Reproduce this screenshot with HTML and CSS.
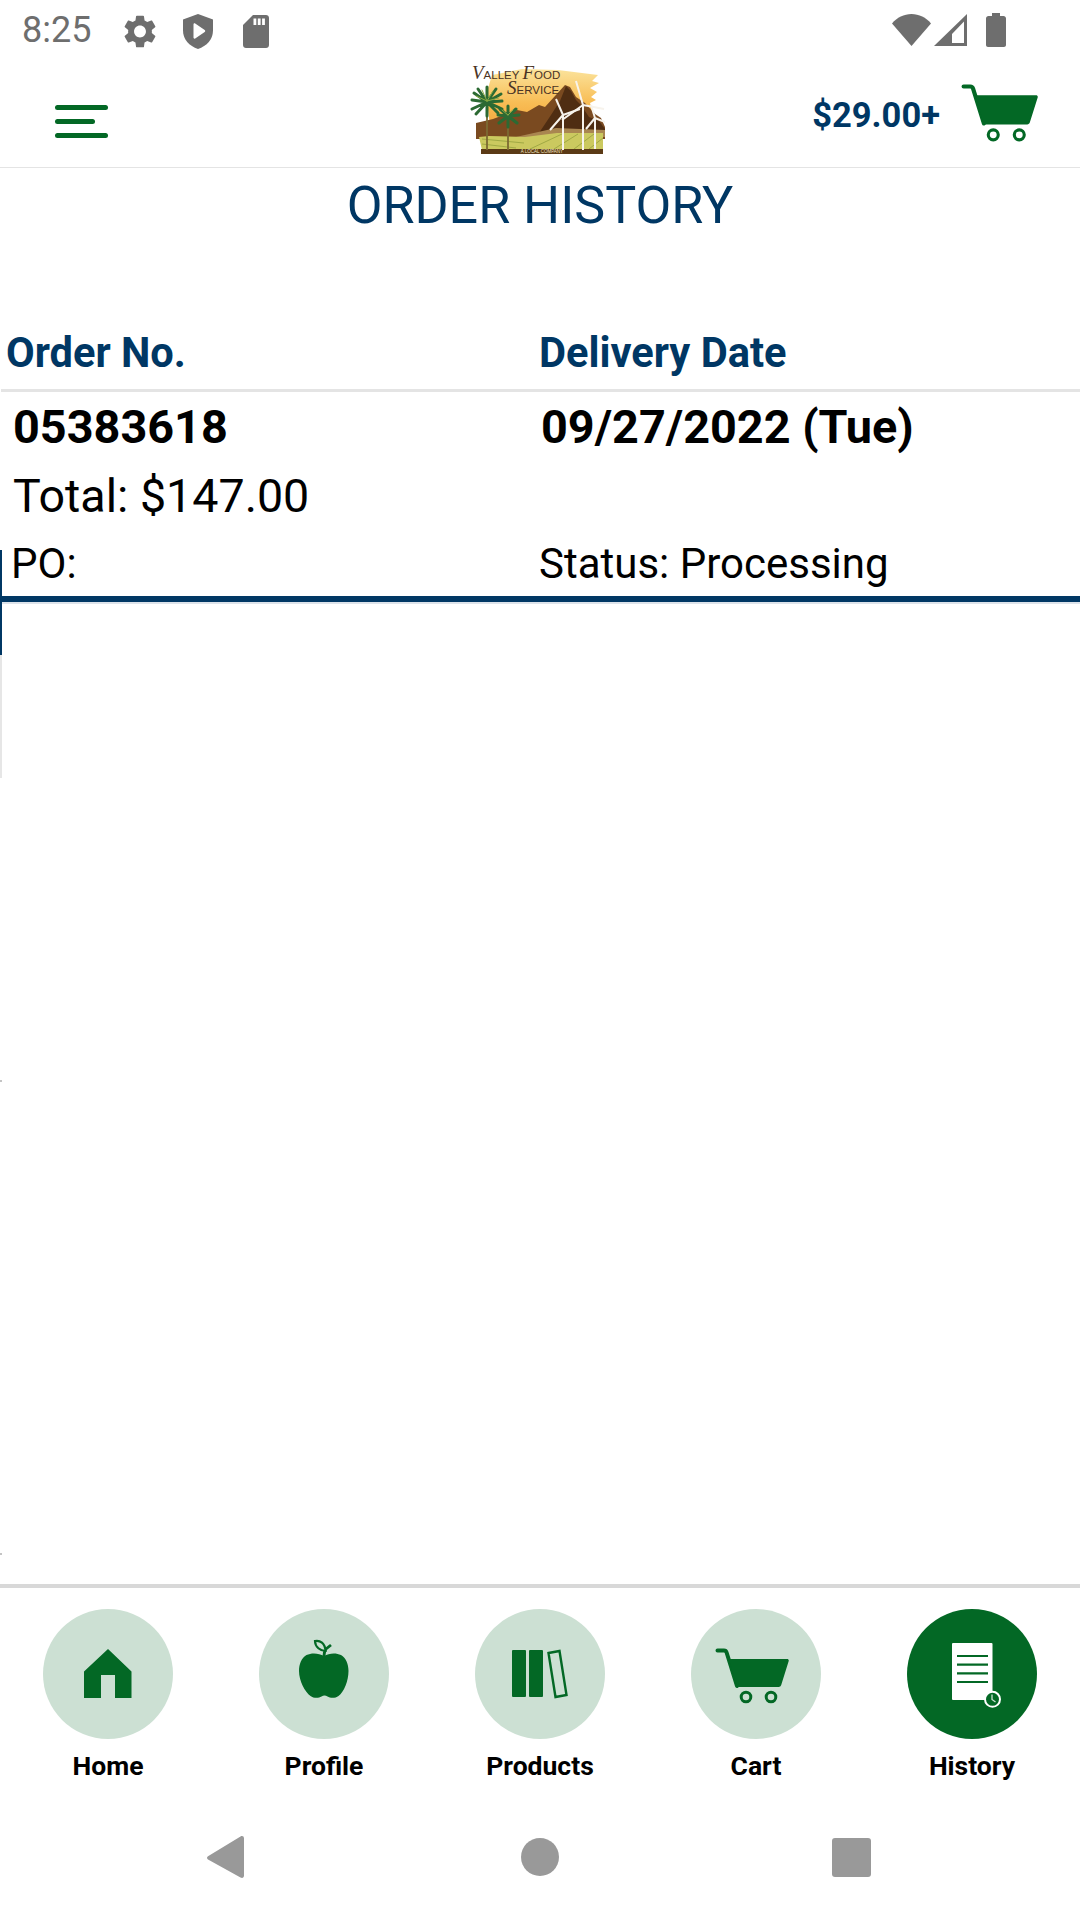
FILE: index.html
```html
<!DOCTYPE html>
<html lang="en">
<head>
    <meta charset="UTF-8">
    <meta name="viewport" content="width=device-width, initial-scale=1.0">
    <title>Order History</title>
    <link rel="stylesheet" href="styles.css">
</head>
<body>
    <svg class="defs" width="0" height="0">
        <symbol id="cart" viewBox="24 39 74 56">
            <path d="M26.500 41.500H33c1.300 0 2.200.7 2.600 2L46 77" fill="none" stroke="currentColor" stroke-width="4" stroke-linecap="round"/>
            <path d="M39 50h57c1.400 0 2 .9 1.700 2l-7.500 24c-.4 1.300-1.300 2-2.600 2H48c-1.300 0-2.200-.7-2.600-2L38 51z" fill="currentColor"/>
            <circle cx="55" cy="88" r="4.800" fill="none" stroke="currentColor" stroke-width="3"/>
            <circle cx="80" cy="88" r="4.800" fill="none" stroke="currentColor" stroke-width="3"/>
        </symbol>
    </svg>

    <div class="status-bar">
        <span class="time">8:25</span>
        <svg class="st-gear" viewBox="2.500 2 19 20"><path fill="#6e6e6e" d="M19.140 12.940c.04-.3.06-.61.06-.94 0-.32-.02-.64-.07-.94l2.030-1.580c.18-.14.23-.41.12-.61l-1.920-3.320c-.12-.22-.37-.29-.59-.22l-2.390.96c-.5-.38-1.030-.7-1.620-.94l-.36-2.540c-.04-.24-.24-.41-.48-.41h-3.840c-.24 0-.43.17-.47.41l-.36 2.540c-.59.24-1.130.57-1.620.94l-2.390-.96c-.22-.08-.47 0-.59.22L2.740 8.870c-.12.21-.08.47.12.61l2.030 1.580c-.05.3-.09.63-.09.94s.02.64.07.94l-2.030 1.580c-.18.14-.23.41-.12.61l1.920 3.320c.12.22.37.29.59.22l2.390-.96c.5.38 1.030.7 1.620.94l.36 2.540c.05.24.24.41.48.41h3.840c.24 0 .44-.17.47-.41l.36-2.540c.59-.24 1.130-.56 1.620-.94l2.390.96c.22.08.47 0 .59-.22l1.920-3.320c.12-.22.07-.47-.12-.61l-2.010-1.580zM12 15.600c-1.980 0-3.600-1.620-3.600-3.600s1.620-3.600 3.600-3.600 3.600 1.620 3.600 3.600-1.620 3.600-3.600 3.600z"/></svg>
        <svg class="st-shield" viewBox="0 0 30 35"><path fill="#6e6e6e" d="M15 0l15 5.500v11c0 9-6.200 15.500-15 18.500C6.200 32 0 25.500 0 16.500v-11z"/><path fill="#fff" d="M10.500 10.500c0-1 .9-1.500 1.700-1l9.500 6.500c.7.500.7 1.500 0 2l-9.500 6.500c-.8.500-1.700 0-1.700-1z"/></svg>
        <svg class="st-card" viewBox="0 0 26 33"><path fill="#6e6e6e" d="M10 0h13c1.700 0 3 1.300 3 3v27c0 1.700-1.300 3-3 3H3c-1.700 0-3-1.300-3-3V10z"/><path fill="#fff" d="M10.500 3.500h2.800v6.500h-2.800zM14.800 3.500h2.800v6.500h-2.800zM19.100 3.500h2.800v6.500h-2.800z"/></svg>
        <span class="status-right">
            <svg class="st-wifi" viewBox="0 0 39 32"><path fill="#6e6e6e" d="M0 9.500C5 3.500 12 0 19.500 0S34 3.500 39 9.500L19.500 32z"/></svg>
            <svg class="st-signal" viewBox="0 0 33 32"><path fill="#6e6e6e" fill-rule="evenodd" d="M33 0v32H0zM30 7.500L18 20v9h12z"/></svg>
            <svg class="st-battery" viewBox="0 0 20 34"><path fill="#6e6e6e" d="M6 0h8v3h3.500c1.400 0 2.500 1.100 2.500 2.500V32c0 1.100-.9 2-2 2H2c-1.100 0-2-.9-2-2V5.500C0 4.100 1.100 3 2.500 3H6z"/></svg>
        </span>
    </div>

    <header class="top-bar">
        <div class="burger">
            <span class="bar"></span>
            <span class="bar bar-short"></span>
            <span class="bar"></span>
        </div>
        <svg class="logo" viewBox="0 -4 135 96">
            <defs>
                <linearGradient id="sky" x1="0" y1="0" x2="0" y2="1">
                    <stop offset="0" stop-color="#fbe39c"/>
                    <stop offset=".6" stop-color="#f8bd55"/>
                    <stop offset="1" stop-color="#f5a83f"/>
                </linearGradient>
            </defs>
            <path fill="url(#sky)" d="M22 12l30-6 36 1 24 3 16 2-6 6 7 2-9 5 7 4-6 5 5 3-6 3 4 14-104 8-4-30z"/>
            <path fill="#7a4a20" d="M6 60l17-4 24-9 10 2 12-7 6 2 20-22 5 2 6 10 9 6 10 11 6 4 4 9v12H6z"/>
            <path fill="#4f2d12" d="M96 23l5 5 5 9 5 5 8 12 10 4 6 8v8l-70 2 16-24 9-14z"/>
            <path fill="#a98650" d="M46 74l40-9 49 2v7H46z"/>
            <path fill="#cbc95f" d="M9 74l10-1 36 1 32-4 46 0v17H12z"/>
            <path stroke="#94a03c" stroke-width=".8" fill="none" d="M12 76l42 4M12 81l34 4M92 71l-32 15M108 71l-24 15M124 71l-20 15M133 75l-14 11"/>
            <rect x="11" y="86" width="122" height="5" fill="#5b3a16"/>
            <text class="logo-tag" x="72" y="90.300" text-anchor="middle">A LOCAL COMPANY</text>
            <path stroke="#7d6a32" stroke-width="1.800" d="M17 42v45M38 54v33"/>
            <g stroke="#2c6a33" stroke-width="3" stroke-linecap="round" fill="none">
                <path d="M17 39L2 37M17 39L4 30M17 39L8 26M17 39L17 24M17 39L26 26M17 39L31 31M17 39L32 38M17 39L2 46M17 39L6 51M17 39L17 53M17 39L28 50M17 39L32 46"/>
                <path d="M38 53L28 52M38 53L30 46M38 53L38 43M38 53L46 46M38 53L49 52M38 53L29 60M38 53L38 64M38 53L47 60"/>
            </g>
            <g stroke="#8cab45" stroke-width="1" stroke-linecap="round" fill="none">
                <path d="M17 38L6 33M17 38L12 27M17 38L23 28M17 38L29 35M38 52L32 47M38 52L43 47"/>
            </g>
            <g stroke="#f7f3ec" stroke-width="2" fill="none">
                <path d="M93 52v35M113 42v45M125 55v31"/>
                <path d="M93 52l-7-16M93 52l-13 15M93 52l17-6"/>
                <path d="M113 42l-7-24M113 42l-21 15M113 42l21 4"/>
                <path d="M125 55l-4-13M125 55l-9 11M125 55l10 4"/>
            </g>
            <text class="logo-name" x="2" y="16"><tspan class="logo-cap">V</tspan>ALLEY <tspan class="logo-cap">F</tspan>OOD</text>
            <text class="logo-name" x="37" y="31"><tspan class="logo-cap">S</tspan>ERVICE</text>
        </svg>
        <div class="cart-total">
            <span class="amount">$29.00+</span>
            <svg class="top-cart"><use href="#cart"/></svg>
        </div>
    </header>

    <main class="content">
        <span class="edge-mark"></span>
        <span class="edge-fade"></span>
        <span class="edge-tick tick-one"></span>
        <span class="edge-tick tick-two"></span>
        <h1 class="page-title">ORDER HISTORY</h1>
        <div class="order-head">
            <span class="head-no">Order No.</span>
            <span>Delivery Date</span>
        </div>
        <div class="order-row">
            <div class="row-main">
                <span>05383618</span>
                <span>09/27/2022 (Tue)</span>
            </div>
            <div class="row-total">Total: $147.00</div>
            <div class="row-meta">
                <span class="meta-po">PO:</span>
                <span>Status: Processing</span>
            </div>
        </div>
    </main>

    <nav class="tab-bar">
        <div class="tab">
            <span class="tab-circle">
                <svg viewBox="0 0 130 130"><path fill="#036825" d="M65 40l23.500 22.500V89H72V66H58v23H41V62.500z"/></svg>
            </span>
            <span class="tab-label">Home</span>
        </div>
        <div class="tab">
            <span class="tab-circle">
                <svg viewBox="0 0 130 130">
                    <path fill="#036825" d="M65 47c5-3 12-3.500 17-1 5 3 7.500 9 7.500 16 0 10-4.500 21-10 25-3 2.300-8 2.500-11 .5-2-1.200-4-1.200-6 0-3 2-8 1.800-11-.5-5.500-4-11.500-15-11.500-25 0-7 2.500-13 7.500-16 5-2.500 12.500-2 17.500 1z"/>
                    <path fill="none" stroke="#036825" stroke-width="2.800" d="M65 47c0-3 .5-5 2-7l5-4"/>
                    <path fill="#cce0d3" stroke="#036825" stroke-width="2.200" d="M56 32c5-1 10 2 10.500 10-5 0-10.500-4-10.500-10z"/>
                </svg>
            </span>
            <span class="tab-label">Profile</span>
        </div>
        <div class="tab">
            <span class="tab-circle">
                <svg viewBox="0 0 130 130">
                    <rect x="37" y="41" width="14" height="47" rx="1" fill="#036825"/>
                    <rect x="54" y="41" width="14" height="47" rx="1" fill="#036825"/>
                    <path fill="none" stroke="#036825" stroke-width="2.400" d="M73.500 44l11-2 7 44-11 2z"/>
                </svg>
            </span>
            <span class="tab-label">Products</span>
        </div>
        <div class="tab">
            <span class="tab-circle">
                <svg viewBox="0 0 130 130"><use href="#cart" x="24" y="39" width="74" height="56"/></svg>
            </span>
            <span class="tab-label">Cart</span>
        </div>
        <div class="tab">
            <span class="tab-circle tab-active">
                <svg viewBox="0 0 130 130">
                    <rect x="45" y="34" width="40.500" height="57" rx="1" fill="#fff"/>
                    <path stroke="#036825" stroke-width="2.200" d="M50 47h31M50 55.700h31M50 64.300h31M50 73h31"/>
                    <circle cx="85.500" cy="90.300" r="7.500" fill="#036825" stroke="#fff" stroke-width="2"/>
                    <path stroke="#cce0d3" stroke-width="1.300" fill="none" d="M85 85.500v5l3.500 2.500"/>
                </svg>
            </span>
            <span class="tab-label">History</span>
        </div>
    </nav>

    <div class="nav-bar">
        <svg class="nav-back" viewBox="0 0 37 42"><path fill="#999" d="M1 23.500c-1.300-1-1.300-2.500 0-3.300L33.500.5C35.300-.5 37 .3 37 2.500v37c0 2.200-1.700 3-3.500 2z"/></svg>
        <span class="nav-home"></span>
        <span class="nav-recent"></span>
    </div>
</body>
</html>
```

FILE: styles.css
```css
body {
    font-family: Roboto, "Liberation Sans", sans-serif;
    background: #ffffff;
    color: #000000;
    display: flex;
    flex-direction: column;
    width: 1080px;
    height: 1920px;
    margin: 0;
    overflow: hidden;
}

.defs {
    position: absolute;
}

/* status bar */
.status-bar {
    display: flex;
    align-items: center;
    height: 60px;
    padding: 0 74px 0 22px;
    flex-shrink: 0;
}
.time {
    width: 70px;
    font-size: 36px;
    line-height: 64px;
    color: #6e6e6e;
}
.status-bar svg {
    display: block;
}
.st-gear {
    width: 32px;
    height: 33px;
    margin: 3px 0 0 32px;
}
.st-shield {
    width: 30px;
    height: 35px;
    margin: 3px 0 0 27px;
}
.st-card {
    width: 26px;
    height: 33px;
    margin: 3px 0 0 30px;
}
.status-right {
    display: flex;
    align-items: center;
    margin-left: auto;
}
.st-wifi {
    width: 39px;
    height: 32px;
}
.st-signal {
    width: 33px;
    height: 32px;
    margin-left: 3px;
}
.st-battery {
    width: 20px;
    height: 34px;
    margin-left: 19px;
}

/* header */
.top-bar {
    display: grid;
    grid-template-columns: 415px 135px 1fr;
    align-items: start;
    height: 107px;
    padding: 0 42px 0 55px;
    border-bottom: 1px solid #e4e4e4;
    flex-shrink: 0;
}
.burger {
    display: flex;
    flex-direction: column;
    gap: 9px;
    margin-top: 45px;
}
.bar {
    display: block;
    width: 53px;
    height: 5px;
    border-radius: 3px;
    background-color: #036825;
}
.bar-short {
    width: 40px;
}
.logo {
    display: block;
    width: 135px;
    height: 96px;
    margin-top: -1px;
}
.logo-name {
    font-family: "Liberation Sans", sans-serif;
    font-size: 11.500px;
    fill: #4a3324;
}
.logo-cap {
    font-family: "Liberation Serif", serif;
    font-style: italic;
    font-size: 19px;
}
.logo-tag {
    font-family: "Liberation Sans", sans-serif;
    font-size: 4.500px;
    fill: #f3e6c4;
}
.cart-total {
    display: flex;
    justify-content: flex-end;
    align-items: center;
    gap: 21px;
    height: 107px;
    margin-top: -1px;
}
.amount {
    padding-top: 5px;
    font-size: 34.500px;
    font-weight: 700;
    color: #003764;
}
.top-cart {
    display: block;
    width: 77px;
    height: 60px;
    color: #036825;
}

/* order list */
.content {
    position: relative;
    flex: 1;
}
.edge-mark {
    position: absolute;
    top: 382px;
    left: 0;
    width: 2px;
    height: 105px;
    background-color: #003764;
}
.edge-fade {
    position: absolute;
    top: 487px;
    left: 0;
    width: 2px;
    height: 123px;
    background-color: #e6e6e6;
}
.edge-tick {
    position: absolute;
    left: 0;
    width: 2px;
    height: 2px;
    background-color: #c4c4c4;
}
.tick-one {
    top: 912px;
}
.tick-two {
    top: 1385px;
}
.page-title {
    margin: 0;
    padding-top: 9px;
    font-size: 52px;
    line-height: 58px;
    font-weight: 400;
    text-align: center;
    color: #003764;
}
.order-head {
    display: grid;
    grid-template-columns: 538px 1fr;
    margin: 94px 0 0 1px;
    padding-bottom: 12px;
    border-bottom: 3px solid #e4e4e4;
    font-size: 41.600px;
    line-height: 48px;
    font-weight: 700;
    color: #003764;
}
.head-no {
    padding-left: 5px;
}
.order-row {
    border-bottom: 6px solid #003764;
    box-shadow: 0 2px 0 #dde3ea;
}
.row-main {
    display: grid;
    grid-template-columns: 528px 1fr;
    padding: 8px 0 0 13px;
    font-size: 46.800px;
    line-height: 54px;
    font-weight: 700;
}
.row-total {
    padding: 15px 0 0 13px;
    font-size: 46.600px;
    line-height: 54px;
}
.row-meta {
    display: grid;
    grid-template-columns: 539px 1fr;
    padding: 16px 0 7px;
    font-size: 42px;
    line-height: 50px;
}
.meta-po {
    padding-left: 11px;
}

/* bottom tabs */
.tab-bar {
    display: grid;
    grid-template-columns: repeat(5, 216px);
    height: 218px;
    border-top: 4px solid #d8d8d8;
    flex-shrink: 0;
}
.tab {
    display: flex;
    flex-direction: column;
    align-items: center;
    padding-top: 21px;
}
.tab-circle {
    display: block;
    width: 130px;
    height: 130px;
    border-radius: 50%;
    background-color: #cce0d3;
    color: #036825;
}
.tab-circle svg {
    display: block;
    width: 130px;
    height: 130px;
}
.tab-active {
    background-color: #036825;
}
.tab-label {
    margin-top: 12px;
    font-size: 26.500px;
    line-height: 30px;
    font-weight: 700;
}

/* android nav */
.nav-bar {
    display: grid;
    grid-template-columns: 244px 315px 312px;
    align-items: center;
    height: 114px;
    padding-bottom: 12px;
    box-sizing: border-box;
    flex-shrink: 0;
}
.nav-back {
    display: block;
    width: 37px;
    height: 42px;
    margin-left: 207px;
}
.nav-home {
    display: block;
    width: 38px;
    height: 38px;
    margin-left: 277px;
    border-radius: 50%;
    background-color: #999999;
}
.nav-recent {
    display: block;
    width: 39px;
    height: 39px;
    margin-left: 273px;
    border-radius: 3px;
    background-color: #999999;
}
```
